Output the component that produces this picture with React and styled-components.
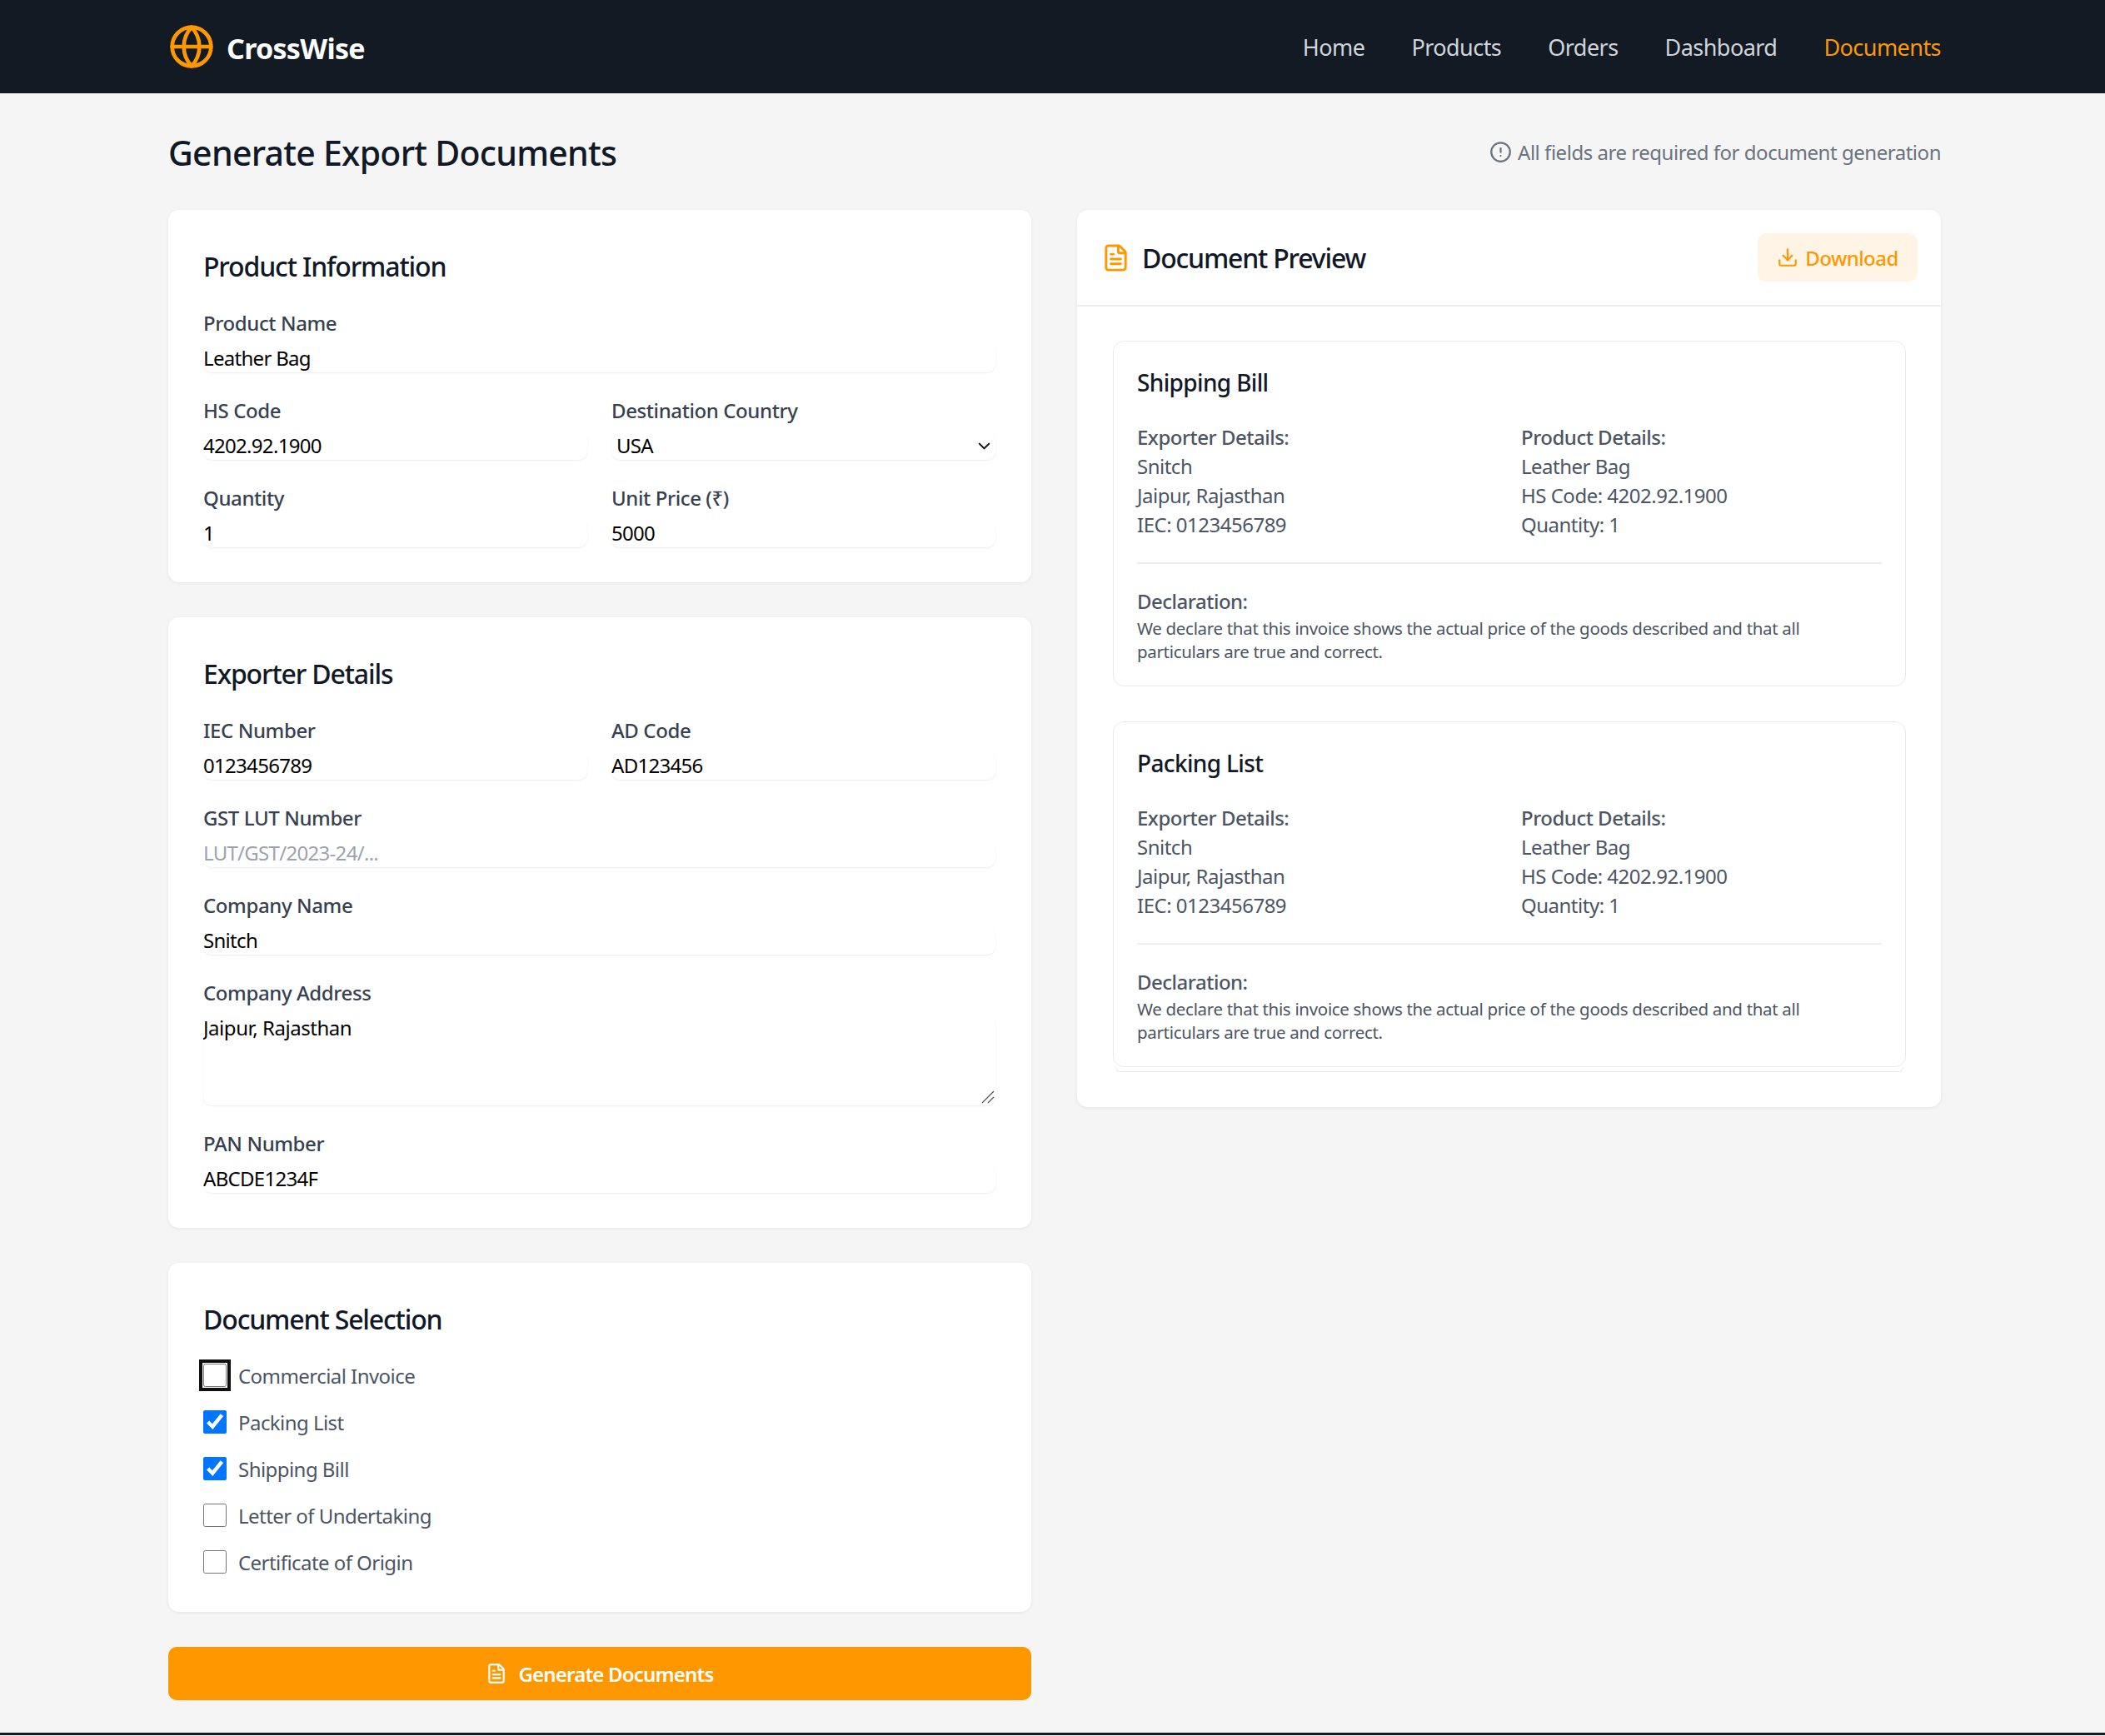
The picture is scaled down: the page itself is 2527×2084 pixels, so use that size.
import React from 'react';
import styled, { createGlobalStyle } from 'styled-components';
import { Globe, FileText, Download, CircleAlert, ChevronDown } from 'lucide-react';

const GlobalStyle = createGlobalStyle`
  * { box-sizing: border-box; }
  html, body { margin: 0; padding: 0; }
  body {
    background: #f5f5f5;
    font-family: "Noto Sans", "Open Sans", sans-serif;
    color: #111827;
  }
`;

const NavBar = styled.header`
  height: 112px;
  background: #121a23;
  padding: 0 197px 0 202px;
  display: flex;
  align-items: center;
  justify-content: space-between;
`;

const Brand = styled.div`
  display: flex;
  align-items: center;
  gap: 15px;
  color: #ff9800;
`;

const BrandName = styled.span`
  color: #fff;
  font-size: 34px;
  font-weight: 700;
  letter-spacing: -0.7px;
  margin-top: 3px;
  margin-left: -1px;
`;

const NavLinks = styled.nav`
  display: flex;
  gap: 56px;
`;

const NavLink = styled.a`
  font-size: 27px;
  letter-spacing: -0.55px;
  color: ${p => (p.$active ? '#ff9800' : '#d1d5db')};
`;

const Main = styled.main`
  width: 2128px;
  margin-left: 202px;
  padding-top: 41px;
`;

const TitleRow = styled.div`
  height: 62px;
  margin-bottom: 37px;
  display: flex;
  align-items: center;
  justify-content: space-between;
`;

const Title = styled.h1`
  margin: -3px 0 0;
  font-size: 41px;
  font-weight: 500;
  letter-spacing: -0.72px;
`;

const Note = styled.div`
  display: flex;
  align-items: center;
  gap: 7px;
  margin-top: -4px;
  font-size: 24px;
  letter-spacing: -0.47px;
  color: #6b7280;
`;

const Columns = styled.div`
  display: grid;
  grid-template-columns: 1036px 1037px;
  gap: 55px;
  align-items: start;
`;

const Stack = styled.div`
  display: flex;
  flex-direction: column;
  gap: 42px;
`;

const Card = styled.section`
  background: #fff;
  border-radius: 13px;
  box-shadow: 0 1px 4px rgba(0, 0, 0, 0.07);
  padding: ${p => p.$padding || '42px'};
`;

const CardTitle = styled.h2`
  margin: 0 0 25px;
  height: 52px;
  line-height: 52px;
  font-size: 32px;
  font-weight: 500;
  letter-spacing: -1.15px;
`;

const Fields = styled.div`
  display: grid;
  grid-template-columns: 461px 461px;
  gap: 29px;
`;

const Field = styled.label`
  display: block;
  position: relative;
  grid-column: ${p => (p.$wide ? '1 / -1' : 'auto')};
`;

const FieldLabel = styled.div`
  height: 34px;
  line-height: 34px;
  margin-bottom: 8px;
  font-size: 24px;
  font-weight: 500;
  letter-spacing: -0.4px;
  color: #374151;
`;

const controlStyles = `
  display: block;
  width: 100%;
  border: none;
  outline: none;
  background: #fff;
  border-radius: 10px;
  box-shadow: 0 1px 2px rgba(0, 0, 0, 0.08);
  font-family: inherit;
  font-size: 24px;
  letter-spacing: -0.7px;
  color: #000;
`;

const Input = styled.input`
  ${controlStyles}
  height: 34px;
  padding: 0 0 2px;
  &::placeholder { color: #9ca3af; }
`;

const Select = styled.select`
  ${controlStyles}
  appearance: none;
  height: 34px;
  padding: 0 0 2px 6px;
`;

const SelectArrow = styled(ChevronDown)`
  position: absolute;
  right: 2px;
  bottom: 5px;
  pointer-events: none;
  color: #111;
`;

const TextArea = styled.textarea`
  ${controlStyles}
  letter-spacing: -0.45px;
  height: 110px;
  padding: 0;
  line-height: 34px;
  resize: none;
`;

const ResizeGrip = styled.svg`
  position: absolute;
  right: 1px;
  bottom: 2px;
  pointer-events: none;
`;

const CheckList = styled.div`
  display: flex;
  flex-direction: column;
  gap: 28px;
  padding: 2px 0 4px;
`;

const CheckRow = styled.label`
  height: 28px;
  display: flex;
  align-items: center;
  gap: 14px;
  font-size: 24px;
  letter-spacing: -0.55px;
  color: #4b5563;
`;

const Check = styled.input`
  width: 28px;
  height: 28px;
  margin: 0;
  border-radius: 7px;
  outline: none;
  box-shadow: ${p => (p.$focused ? '0 0 0 1px #fff, 0 0 0 5px #101010' : 'none')};
`;

const GenerateButton = styled.button`
  height: 64px;
  border: none;
  border-radius: 10px;
  background: #ff9800;
  color: #fff;
  display: flex;
  align-items: center;
  justify-content: center;
  gap: 13px;
  font-family: inherit;
  font-size: 24px;
  font-weight: 600;
  letter-spacing: -0.8px;
`;

const PreviewHeader = styled.div`
  height: 116px;
  padding: 0 28px 0 29px;
  border-bottom: 2px solid #eceef1;
  display: flex;
  align-items: center;
  justify-content: space-between;
`;

const PreviewTitle = styled.div`
  display: flex;
  align-items: center;
  gap: 14px;
  color: #ff9800;
`;

const PreviewHeading = styled.h2`
  margin: 0;
  font-size: 32px;
  font-weight: 500;
  letter-spacing: -1.2px;
  color: #111827;
`;

const DownloadButton = styled.button`
  height: 58px;
  width: 192px;
  border: none;
  border-radius: 10px;
  background: #fff4e5;
  color: #ff9800;
  display: flex;
  align-items: center;
  justify-content: center;
  gap: 8px;
  font-family: inherit;
  font-size: 24px;
  font-weight: 500;
  letter-spacing: -0.55px;
`;

const PreviewBody = styled.div`
  padding: 41px 42px 42px 43px;
  display: flex;
  flex-direction: column;
`;

const DocCard = styled.article`
  border: 1.5px solid #e8eaee;
  border-radius: 13px;
  padding: 28px 28px 27px;
  margin-bottom: ${p => (p.$last ? '0' : '42px')};
`;

const DocEdge = styled.div`
  height: 6px;
  margin: 0 3px;
  border: 1.5px solid #e8eaee;
  border-top: none;
  border-radius: 0 0 10px 10px;
`;

const DocTitle = styled.h3`
  margin: 0 0 27px;
  height: 42px;
  line-height: 42px;
  font-size: 28px;
  font-weight: 500;
  letter-spacing: -0.65px;
`;

const DocColumns = styled.div`
  display: grid;
  grid-template-columns: 461px 1fr;
  padding-bottom: 28px;
  border-bottom: 2px solid #eceef1;
`;

const DocLine = styled.div`
  height: 35px;
  line-height: 35px;
  font-size: 24px;
  letter-spacing: -0.5px;
  font-weight: ${p => (p.$strong ? 500 : 400)};
  color: #4b5563;
`;

const Declaration = styled.div`
  padding-top: 27px;
`;

const DeclarationText = styled.p`
  margin: 1px 0 0;
  max-width: 810px;
  font-size: 20.5px;
  line-height: 28px;
  letter-spacing: -0.32px;
  color: #4b5563;
`;

const FootLine = styled.div`
  height: 3px;
  margin-top: 39px;
  background: #121a23;
`;

const navItems = ['Home', 'Products', 'Orders', 'Dashboard', 'Documents'];

const documents = [
  { name: 'Commercial Invoice', focused: true },
  { name: 'Packing List', checked: true },
  { name: 'Shipping Bill', checked: true },
  { name: 'Letter of Undertaking' },
  { name: 'Certificate of Origin' },
];

const DocumentCard = ({ title, last }) => (
  <DocCard $last={last}>
    <DocTitle>{title}</DocTitle>
    <DocColumns>
      <div>
        <DocLine $strong>Exporter Details:</DocLine>
        <DocLine>Snitch</DocLine>
        <DocLine>Jaipur, Rajasthan</DocLine>
        <DocLine>IEC: 0123456789</DocLine>
      </div>
      <div>
        <DocLine $strong>Product Details:</DocLine>
        <DocLine>Leather Bag</DocLine>
        <DocLine>HS Code: 4202.92.1900</DocLine>
        <DocLine>Quantity: 1</DocLine>
      </div>
    </DocColumns>
    <Declaration>
      <DocLine $strong>Declaration:</DocLine>
      <DeclarationText>
        We declare that this invoice shows the actual price of the goods described and that all
        particulars are true and correct.
      </DeclarationText>
    </Declaration>
  </DocCard>
);

const App = () => (
  <>
    <GlobalStyle />
    <NavBar>
      <Brand>
        <Globe size={56} strokeWidth={2} />
        <BrandName>CrossWise</BrandName>
      </Brand>
      <NavLinks>
        {navItems.map(item => (
          <NavLink key={item} $active={item === 'Documents'}>{item}</NavLink>
        ))}
      </NavLinks>
    </NavBar>
    <Main>
      <TitleRow>
        <Title>Generate Export Documents</Title>
        <Note>
          <CircleAlert size={27} />
          All fields are required for document generation
        </Note>
      </TitleRow>
      <Columns>
        <Stack>
          <Card>
            <CardTitle>Product Information</CardTitle>
            <Fields>
              <Field $wide>
                <FieldLabel>Product Name</FieldLabel>
                <Input defaultValue="Leather Bag" />
              </Field>
              <Field>
                <FieldLabel>HS Code</FieldLabel>
                <Input defaultValue="4202.92.1900" />
              </Field>
              <Field>
                <FieldLabel>Destination Country</FieldLabel>
                <Select defaultValue="USA">
                  <option>USA</option>
                </Select>
                <SelectArrow size={23} strokeWidth={2.2} />
              </Field>
              <Field>
                <FieldLabel>Quantity</FieldLabel>
                <Input defaultValue="1" />
              </Field>
              <Field>
                <FieldLabel>Unit Price (₹)</FieldLabel>
                <Input defaultValue="5000" />
              </Field>
            </Fields>
          </Card>
          <Card>
            <CardTitle>Exporter Details</CardTitle>
            <Fields>
              <Field>
                <FieldLabel>IEC Number</FieldLabel>
                <Input defaultValue="0123456789" />
              </Field>
              <Field>
                <FieldLabel>AD Code</FieldLabel>
                <Input defaultValue="AD123456" />
              </Field>
              <Field $wide>
                <FieldLabel>GST LUT Number</FieldLabel>
                <Input placeholder="LUT/GST/2023-24/..." />
              </Field>
              <Field $wide>
                <FieldLabel>Company Name</FieldLabel>
                <Input defaultValue="Snitch" />
              </Field>
              <Field $wide>
                <FieldLabel>Company Address</FieldLabel>
                <TextArea defaultValue="Jaipur, Rajasthan" />
                <ResizeGrip width="16" height="16" viewBox="0 0 16 16" stroke="#555" strokeWidth="1.3" fill="none">
                  <path d="M15 1 L1 15" />
                  <path d="M15 8 L8 15" />
                </ResizeGrip>
              </Field>
              <Field $wide>
                <FieldLabel>PAN Number</FieldLabel>
                <Input defaultValue="ABCDE1234F" />
              </Field>
            </Fields>
          </Card>
          <Card>
            <CardTitle>Document Selection</CardTitle>
            <CheckList>
              {documents.map(doc => (
                <CheckRow key={doc.name}>
                  <Check type="checkbox" defaultChecked={doc.checked} $focused={doc.focused} />
                  {doc.name}
                </CheckRow>
              ))}
            </CheckList>
          </Card>
          <GenerateButton>
            <FileText size={26} />
            Generate Documents
          </GenerateButton>
        </Stack>
        <Card $padding="0">
          <PreviewHeader>
            <PreviewTitle>
              <FileText size={35} />
              <PreviewHeading>Document Preview</PreviewHeading>
            </PreviewTitle>
            <DownloadButton>
              <Download size={26} />
              Download
            </DownloadButton>
          </PreviewHeader>
          <PreviewBody>
            <DocumentCard title="Shipping Bill" />
            <DocumentCard title="Packing List" last />
            <DocEdge />
          </PreviewBody>
        </Card>
      </Columns>
    </Main>
    <FootLine />
  </>
);

export default App;
